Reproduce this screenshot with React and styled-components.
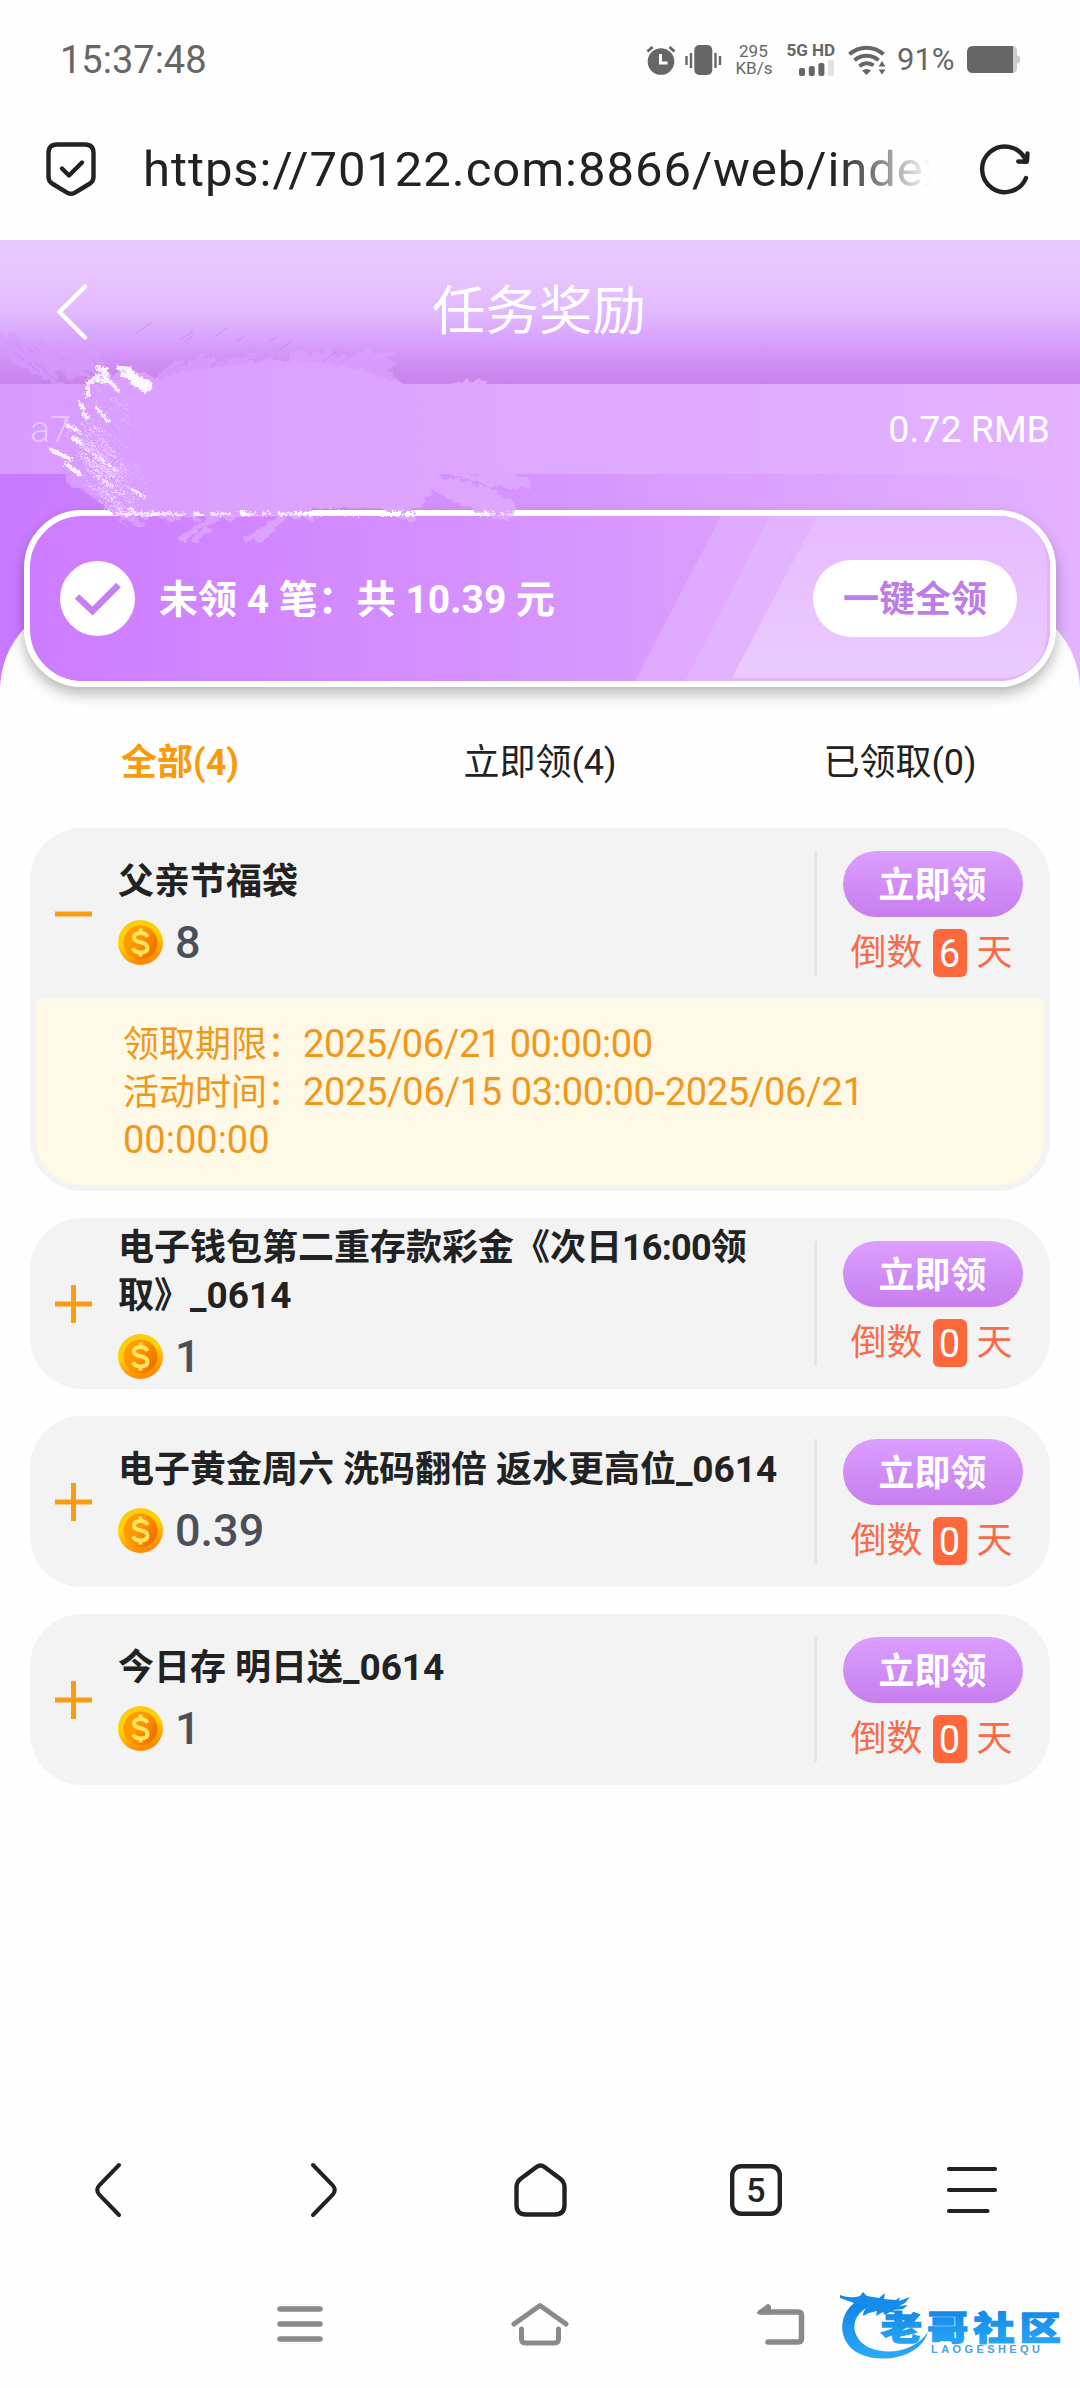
import React from 'react'
import styled, { createGlobalStyle } from 'styled-components'

const GlobalStyle = createGlobalStyle`
  * {
    box-sizing: border-box;
  }

  body {
    margin: 0;
    background: #fefefe;
    font-family: Roboto, 'Noto Sans CJK SC', sans-serif;
    color: #222;
  }

  svg {
    display: block;
    flex: none;
    overflow: visible;
  }
`

const Screen = styled.div`
  display: flex;
  flex-direction: column;
  width: 1080px;
  height: 2388px;
  overflow: hidden;
  background: #fefefe;
`

/* status bar */

const StatusBar = styled.div`
  display: flex;
  align-items: center;
  justify-content: space-between;
  height: 100px;
  padding: 19px 60px 0 60px;
  color: #666;
`

const Clock = styled.span`
  font-size: 38px;
`

const StatusIcons = styled.div`
  display: flex;
  align-items: center;
`

const Speed = styled.div`
  width: 36px;
  margin: 0 15px 0 14px;
  font-size: 17px;
  line-height: 17px;
  text-align: center;
  white-space: nowrap;
`

const Signal = styled.div`
  display: flex;
  flex-direction: column;
  align-items: flex-end;
  gap: 3px;
  margin-right: 13px;
  font-size: 17px;
  font-weight: 700;
  line-height: 14px;
  white-space: nowrap;
`

const Percent = styled.span`
  width: 60px;
  margin: 0 10px 0 12px;
  font-size: 31px;
`

/* address bar */

const AddressBar = styled.div`
  display: flex;
  align-items: center;
  height: 140px;
  padding: 0 48px 3px 46px;
`

const Url = styled.div`
  flex: none;
  width: 788px;
  margin: 3px 48px 0 47px;
  overflow: hidden;
  font-size: 49px;
  line-height: 64px;
  letter-spacing: 0.95px;
  white-space: nowrap;
  mask-image: linear-gradient(90deg, #000 88%, transparent 100%);
`

/* page header */

const Hero = styled.div`
  position: relative;
  flex: none;
  height: 450px;
  background: linear-gradient(90deg, #c979ff, #d695ff 50%, #e3b2ff);
`

const TitleBar = styled.div`
  display: grid;
  grid-template-columns: 100px 1fr 102px;
  align-items: center;
  height: 144px;
  background: linear-gradient(#e9caff, #e7c2ff 30%, #e1b9ff 50%, #d9a4fd 68%, #d18ff5 84%, #c983ec);
  color: #fff;
`

const PageTitle = styled.h1`
  margin: 0;
  font-size: 53.5px;
  font-weight: 400;
  line-height: 70px;
  text-align: center;
`

const UserBar = styled.div`
  display: flex;
  align-items: center;
  justify-content: space-between;
  height: 90px;
  padding: 0 30px;
  background: linear-gradient(90deg, #d99aff, #dfa8ff 50%, #e3b2ff);
  color: #fff;
  font-size: 37.5px;
`

const UserName = styled.span`
  font-weight: 300;
  opacity: 0.4;
`

const SheetTop = styled.div`
  height: 90px;
  margin-top: 126px;
  border-radius: 90px 90px 0 0;
  background: #fefefe;
`

const Scribble = styled.svg`
  position: absolute;
  left: 0;
  top: 80px;
  z-index: 2;
`

const BannerWrap = styled.div`
  position: absolute;
  left: 24px;
  right: 24px;
  top: 270px;
  border-radius: 58px;
  box-shadow: 0 7px 14px rgba(0, 0, 0, 0.28);
`

const Banner = styled.div`
  position: relative;
  display: flex;
  align-items: center;
  height: 177px;
  padding: 0 33px 0 30px;
  border: 6px solid #fff;
  border-radius: 58px;
  overflow: hidden;
  background: linear-gradient(90deg, #cd7cff, #d896ff 55%, #dc9eff 70%);
`

const Stripes = styled.svg`
  position: absolute;
  inset: 0;
`

const BannerIcon = styled.svg`
  position: relative;
`

const BannerText = styled.div`
  position: relative;
  flex: 1;
  margin: -6px 0 0 24px;
  color: #fff;
  font-size: 39px;
  font-weight: 700;
  white-space: nowrap;
`

const ClaimAll = styled.button`
  position: relative;
  width: 204px;
  height: 77px;
  padding: 0 0 5px;
  border: 0;
  border-radius: 39px;
  background: #fff;
  color: #be7ce6;
  font-family: inherit;
  font-size: 36px;
  font-weight: 700;
`

/* tabs */

const Tabs = styled.div`
  display: grid;
  grid-template-columns: repeat(3, 360px);
  height: 138px;
  padding-top: 46px;
`

const Tab = styled.div`
  font-size: 36px;
  line-height: 54px;
  text-align: center;
  color: ${p => (p.$active ? '#f99a0b' : '#222')};
  font-weight: ${p => (p.$active ? 700 : 400)};
`

/* rewards */

const List = styled.div`
  display: flex;
  flex-direction: column;
  gap: 27px;
  padding: 0 30px;
`

const Card = styled.div`
  border-radius: 52px;
  overflow: hidden;
  background: #f3f3f3;
`

const CardHead = styled.div`
  display: flex;
  align-items: center;
  height: 171px;
`

const Toggle = styled.div`
  width: 88px;
  padding-left: 25px;
`

const Info = styled.div`
  width: 696px;
  padding-bottom: 5px;
`

const Name = styled.div`
  width: 670px;
  padding-top: 1px;
  font-size: 36px;
  font-weight: 700;
  line-height: 48px;
`

const Digits = styled.span`
  font-size: ${p => p.$size}px;
  letter-spacing: ${p => p.$spacing || 0}px;
  line-height: 1;
`

const Amount = styled.div`
  display: flex;
  align-items: center;
  gap: 12px;
  height: 45px;
  margin-top: 14px;
  color: #4b4f5a;
  font-size: 45px;
  font-weight: 500;
`

const Action = styled.div`
  display: flex;
  flex-direction: column;
  align-items: center;
  width: 236px;
  height: 125px;
  padding-right: 4px;
  border-left: 3px solid #e6e6e6;
`

const ClaimButton = styled.button`
  flex: none;
  width: 180px;
  height: 66px;
  margin-left: 2px;
  padding: 0 0 4px;
  border: 0;
  border-radius: 33px;
  background: linear-gradient(#dc9eff, #c77eee);
  color: #fff;
  font-family: inherit;
  font-size: 36px;
  font-weight: 700;
`

const Countdown = styled.div`
  display: flex;
  align-items: center;
  gap: 10px;
  height: 48px;
  margin-top: 12px;
  color: #f96b48;
  font-size: 36px;
  line-height: 51px;
`

const Days = styled.span`
  width: 34px;
  height: 48px;
  border-radius: 6px;
  background: #ff683d;
  color: #fff;
  font-size: 38px;
  text-align: center;
`

const Detail = styled.div`
  height: 186px;
  margin: 0 6px 6px;
  padding: 22px 120px 0 87px;
  border-radius: 0 0 46px 46px;
  background: #fef9e6;
  color: #f0981c;
  font-size: 36px;
  line-height: 48px;
`

/* bottom bars */

const Spacer = styled.div`
  flex: 1;
`

const BrowserNav = styled.div`
  display: grid;
  grid-template-columns: repeat(5, 216px);
  justify-items: center;
  align-items: center;
  height: 120px;
`

const SystemNav = styled.div`
  display: flex;
  align-items: center;
  height: 138px;
  padding: 10px 12px 0 277px;
`

const NavIcon = styled.svg`
  margin-right: ${p => p.$gap}px;
`

const AlarmIcon = () => (
  <svg width="30" height="30" viewBox="0 0 30 30">
    <circle cx="15" cy="16.5" r="13.3" fill="#666" />
    <path d="M1.5 6.5 6.5 2M28.5 6.5 23.5 2" stroke="#666" strokeWidth="3" fill="none" />
    <path d="M14.5 9v9h7" stroke="#fff" strokeWidth="3" fill="none" />
  </svg>
)

const VibrateIcon = () => (
  <svg width="45" height="30" viewBox="-9 0 45 30">
    <rect x="9.3" y="0" width="18" height="30" rx="5" fill="#666" />
    <path d="M1.5 11v9M6 8v15M30.5 8v15M35 11v9" stroke="#666" strokeWidth="2.4" />
  </svg>
)

const SignalIcon = () => (
  <svg width="36" height="16" viewBox="0 0 36 16">
    <rect x="0" y="8" width="6" height="8" rx="2" fill="#666" />
    <rect x="9.8" y="6" width="6" height="10" rx="2" fill="#666" />
    <rect x="19.4" y="3" width="6" height="13" rx="2" fill="#666" />
    <rect x="29" y="0" width="6" height="16" rx="2" fill="#e2e2e2" />
  </svg>
)

const WifiIcon = () => (
  <svg width="37" height="30" viewBox="0 0 37 30">
    <g fill="none" stroke="#666" strokeWidth="4">
      <path d="M1.5 9.3a25 25 0 0 1 34 0" />
      <path d="M6.5 15.3a18 18 0 0 1 24 0" />
      <path d="M11.5 21.2a11 11 0 0 1 14-.8" />
    </g>
    <path d="M14 25.5c3-2 6-2 9 0L18.5 30zM30.5 21.5l3.5-5.5 3.5 5.5zM30.5 24.500h7L34 29.500z" fill="#666" />
  </svg>
)

const BatteryIcon = () => (
  <svg width="53" height="27" viewBox="0 0 53 27">
    <path d="M44 0h1q5 0 5 5v4.500q3 0 3 2v4q0 2-3 2V22q0 5-5 5h-1z" fill="#ccc" />
    <path d="M6 0h40v27H6q-6 0-6-6V6q0-6 6-6z" fill="#666" />
  </svg>
)

const ShieldIcon = () => (
  <svg width="50" height="54" viewBox="0 0 50 54" fill="none" stroke="#222" strokeWidth="4.400" strokeLinecap="round" strokeLinejoin="round">
    <path d="M11 2.500h28q8.500 0 8.500 8.500v24q0 4-3.500 6.500L28.500 50.800q-3.500 2-7 0L6 41.500Q2.500 39 2.500 35V11q0-8.500 8.500-8.500z" />
    <path d="M16 26.500l7 7 13-13" />
  </svg>
)

const ReloadIcon = () => (
  <svg width="51" height="50" viewBox="0 0 51 50" fill="none" stroke="#222" strokeWidth="4.400" strokeLinecap="round" strokeLinejoin="round">
    <path d="M47 34A22.800 22.800 0 1 1 46 14.500" />
    <path d="M48.500 9.500l-.6 8.200-8.600-.2" />
  </svg>
)

const CheckIcon = () => (
  <BannerIcon width="75" height="75" viewBox="0 0 75 75">
    <circle cx="37.500" cy="37.500" r="37.500" fill="#fff" />
    <path d="M17 35.500l15.500 14.500 26-26" fill="none" stroke="#c77ff4" strokeWidth="6.500" />
  </BannerIcon>
)

const ToggleIcon = ({ open }) => (
  <svg width="37" height="38" viewBox="0 0 37 38" stroke="#f99c12" strokeWidth="5">
    <path d={open ? 'M0 19h37' : 'M0 19h37M18.500 0v38'} />
  </svg>
)

const CoinIcon = () => (
  <svg width="45" height="45" viewBox="0 0 45 45">
    <defs>
      <linearGradient id="rim" x1="0" y1="0" x2="0.300" y2="1">
        <stop offset="0" stopColor="#f9c80e" />
        <stop offset="0.500" stopColor="#ffd400" />
        <stop offset="1" stopColor="#ff8c00" />
      </linearGradient>
      <linearGradient id="face" x1="0" y1="0" x2="1" y2="0.600">
        <stop offset="0" stopColor="#ff9d00" />
        <stop offset="0.500" stopColor="#ff9800" />
        <stop offset="1" stopColor="#f36f00" />
      </linearGradient>
    </defs>
    <circle cx="22.500" cy="22.500" r="22.500" fill="url(#rim)" />
    <circle cx="22.500" cy="22.500" r="17" fill="url(#face)" />
    <path
      d="M29.500 17q-1.500-4-7-4-6.500 0-6.500 4.500 0 3.500 6.500 4.800 7 1.400 7 5.500 0 4.700-7 4.700-5.500 0-7.500-4.200M22.500 8.500v4M22.500 32.500v4"
      fill="none"
      stroke="#ffe45c"
      strokeWidth="4"
    />
  </svg>
)

// parallel strokes scattered along the line a-b
const hatch = (a, b, { count, spread, len, angle, seed }) => {
  let s = seed
  const rand = () => {
    s = (s * 16807) % 2147483647
    return s / 2147483647
  }
  const rad = (angle * Math.PI) / 180
  let d = ''
  for (let i = 0; i < count; i++) {
    const t = rand()
    const l = len * (0.4 + rand() * 0.6)
    const x = a[0] + (b[0] - a[0]) * t + (rand() - 0.5) * spread
    const y = a[1] + (b[1] - a[1]) * t + (rand() - 0.5) * spread
    d += `M${x.toFixed(1)} ${y.toFixed(1)}l${(l * Math.cos(rad)).toFixed(1)} ${(l * Math.sin(rad)).toFixed(1)}`
  }
  return d
}

// smeared brush marks over the account name
const BrushMarks = () => (
  <Scribble width="560" height="230" viewBox="0 320 560 230">
    <defs>
      <linearGradient id="smear" gradientUnits="userSpaceOnUse" x1="0" y1="0" x2="540" y2="0">
        <stop offset="0" stopColor="#d698ff" />
        <stop offset="0.300" stopColor="#dba0ff" />
        <stop offset="1" stopColor="#dea7ff" />
      </linearGradient>
      <filter id="ragged" filterUnits="userSpaceOnUse" x="-20" y="310" width="600" height="250">
        <feTurbulence type="fractalNoise" baseFrequency="0.120" numOctaves="3" seed="4" />
        <feDisplacementMap in="SourceGraphic" scale="8" xChannelSelector="R" yChannelSelector="G" />
      </filter>
      <filter id="crumbs" filterUnits="userSpaceOnUse" x="-20" y="310" width="600" height="250">
        <feTurbulence type="fractalNoise" baseFrequency="0.400" numOctaves="2" seed="2" />
        <feDisplacementMap in="SourceGraphic" scale="7" xChannelSelector="R" yChannelSelector="G" />
      </filter>
    </defs>
    <g filter="url(#ragged)" fill="none" stroke="url(#smear)" strokeLinecap="round">
      <g strokeWidth="5" opacity="0.650">
        <path d={hatch([0, 345], [70, 352], { count: 40, spread: 26, len: 46, angle: 38, seed: 11 })} />
        <path d={hatch([150, 385], [350, 378], { count: 80, spread: 14, len: 46, angle: -36, seed: 23 })} />
        <path d={hatch([320, 385], [370, 380], { count: 36, spread: 16, len: 40, angle: -38, seed: 31 })} />
        <path d={hatch([360, 360], [390, 376], { count: 16, spread: 10, len: 26, angle: 40, seed: 35 })} />
      </g>
      <path
        d="M160 378Q200 366 290 360 350 362 410 386L440 392V480L420 508H330L150 514 125 510 66 482 70 400 105 376 130 370z"
        fill="url(#smear)"
        stroke="none"
      />
      <path d={hatch([66, 472], [125, 512], { count: 40, spread: 8, len: 30, angle: 36, seed: 41 })} strokeWidth="4" opacity="0.800" />
      <path d={hatch([110, 508], [310, 508], { count: 46, spread: 8, len: 18, angle: 28, seed: 53 })} strokeWidth="5" />
      <path d="M182 538L214 518M194 540L208 530M248 538L284 518M258 540L274 528" strokeWidth="6" />
      <path d={hatch([380, 500], [400, 508], { count: 18, spread: 8, len: 26, angle: 30, seed: 61 })} strokeWidth="5" />
      <path d={hatch([425, 478], [485, 496], { count: 46, spread: 14, len: 42, angle: 32, seed: 71 })} strokeWidth="5" />
      <path d={hatch([455, 474], [510, 476], { count: 20, spread: 6, len: 28, angle: 20, seed: 79 })} strokeWidth="5" />
      <path d="M452 386L466 382M464 386L484 382" strokeWidth="5" />
    </g>
    <path
      d={hatch([130, 345], [330, 350], { count: 8, spread: 26, len: 20, angle: -36, seed: 83 }) +
        hatch([10, 345], [80, 375], { count: 8, spread: 18, len: 18, angle: 38, seed: 87 })}
      stroke="#b877e0"
      strokeWidth="1"
      opacity="0.500"
      fill="none"
    />
    <g stroke="#fff" fill="none" filter="url(#crumbs)">
      <g strokeLinecap="round">
        <path d="M98 368L106 370M118 368L130 369M122 373L150 389M128 371L151 385M132 382L146 391" strokeWidth="4.500" opacity="0.900" />
        <path d="M88 384Q92 380 98 376L108 374M88 386V396M104 376L118 390M92 380L112 382" strokeWidth="4" opacity="0.850" />
        <path d="M80 403L84 409M84 414L88 418M97 408L108 421M67 426L76 430M73 438L80 442M50 449L70 459M66 464L80 474" strokeWidth="4" opacity="0.850" />
      </g>
      <path d={hatch([72, 425], [112, 502], { count: 110, spread: 26, len: 34, angle: 36, seed: 91 })} strokeWidth="1" strokeDasharray="3 2" opacity="0.500" />
      <path d={hatch([95, 395], [120, 480], { count: 70, spread: 36, len: 22, angle: 36, seed: 97 })} strokeWidth="0.900" strokeDasharray="2 3" opacity="0.400" />
      <path d="M130 488L146 498M128 508L136 512" strokeWidth="2.500" opacity="0.800" />
      <path d="M116 514H172" strokeWidth="4" opacity="0.650" />
      <path d="M172 514H345" strokeWidth="3" strokeDasharray="14 7 5 12 22 9" opacity="0.650" />
      <path d="M295 513L330 514M336 513H368M378 514H420" strokeWidth="4" strokeDasharray="24 3 9 6" />
      <path d="M478 514H516" strokeWidth="3" strokeDasharray="5 4 9 4" opacity="0.700" />
    </g>
  </Scribble>
)

const SiteLogo = () => (
  <svg width="226" height="76" viewBox="844 2288 226 76">
    <defs>
      <linearGradient id="logo" x1="0" y1="0" x2="0" y2="1">
        <stop offset="0" stopColor="#0f82e2" />
        <stop offset="1" stopColor="#2aaafa" />
      </linearGradient>
    </defs>
    <path
      d="M864 2300C838 2312 838 2345 862 2356 884 2366 922 2360 930 2334 918 2352 892 2358 872 2350 850 2340 852 2314 874 2308z"
      fill="url(#logo)"
    />
    <path
      d="M842 2297q10 4 20 1l3-4 4 4 12 2 6-5-1 6 12 1 4-3-1 4 11-4-5 6-6 3 9-1-5 4-10 1 6 3-9-1-5 3-2-3-7 4 1-5-8 2-6 3q0-5 4-9-14-4-27-9z"
      fill="#168be8"
    />
    <text
      x="883"
      y="2342"
      fill="url(#logo)"
      stroke="url(#logo)"
      strokeWidth="1.500"
      fontFamily="'Noto Sans CJK SC', sans-serif"
      fontWeight="900"
      fontSize="33"
      textLength="145"
      transform="translate(883 0) scale(1.240 1) translate(-883 0)"
    >
      老哥社区
    </text>
    <text x="933" y="2355" fill="#4aa3dd" fontFamily="'Liberation Sans', sans-serif" fontWeight="700" fontSize="11" textLength="109">
      LAOGESHEQU
    </text>
  </svg>
)

const rewards = [
  {
    name: '父亲节福袋',
    amount: '8',
    days: 6,
    open: true,
  },
  {
    name: (
      <>
        电子钱包第二重存款彩金《次日
        <Digits $size={36} $spacing={-0.8}>
          16:00
        </Digits>
        领取》<Digits $size={37}>_0614</Digits>
      </>
    ),
    amount: '1',
    days: 0,
  },
  {
    name: (
      <>
        电子黄金周六 洗码翻倍 返水更高位<Digits $size={37}>_0614</Digits>
      </>
    ),
    amount: '0.39',
    days: 0,
  },
  {
    name: (
      <>
        今日存 明日送<Digits $size={37}>_0614</Digits>
      </>
    ),
    amount: '1',
    days: 0,
  },
]

const RewardCard = ({ name, amount, days, open }) => (
  <Card>
    <CardHead>
      <Toggle>
        <ToggleIcon open={open} />
      </Toggle>
      <Info>
        <Name>{name}</Name>
        <Amount>
          <CoinIcon />
          {amount}
        </Amount>
      </Info>
      <Action>
        <ClaimButton>立即领</ClaimButton>
        <Countdown>
          倒数<Days>{days}</Days>天
        </Countdown>
      </Action>
    </CardHead>
    {open && (
      <Detail>
        领取期限：
        <Digits $size={38} $spacing={-0.45}>
          2025/06/21 00:00:00
        </Digits>
        <br />
        活动时间：
        <Digits $size={38} $spacing={-0.35}>
          2025/06/15 03:00:00-2025/06/21
        </Digits>
        <br />
        <Digits $size={38}>00:00:00</Digits>
      </Detail>
    )}
  </Card>
)

const App = () => (
  <>
    <GlobalStyle />
    <Screen>
      <StatusBar>
        <Clock>15:37:48</Clock>
        <StatusIcons>
          <AlarmIcon />
          <VibrateIcon />
          <Speed>
            295
            <br />
            KB/s
          </Speed>
          <Signal>
            5G HD
            <SignalIcon />
          </Signal>
          <WifiIcon />
          <Percent>91%</Percent>
          <BatteryIcon />
        </StatusIcons>
      </StatusBar>
      <AddressBar>
        <ShieldIcon />
        <Url>https://70122.com:8866/web/index</Url>
        <ReloadIcon />
      </AddressBar>

      <Hero>
        <TitleBar>
          <svg width="90" height="56" viewBox="0 0 90 56" fill="none" stroke="#fff" strokeWidth="4.500" strokeLinecap="round" strokeLinejoin="round">
            <path d="M85 2.500L59.500 28 85 53.500" />
          </svg>
          <PageTitle>任务奖励</PageTitle>
        </TitleBar>
        <UserBar>
          <UserName>a7</UserName>
          <span>0.72 RMB</span>
        </UserBar>
        <SheetTop />
        <BannerWrap>
          <Banner>
            <Stripes width="1020" height="165" viewBox="0 0 1020 165">
              <defs>
                <linearGradient id="shine" x1="0" y1="0" x2="0" y2="1">
                  <stop offset="0" stopColor="#e6baff" />
                  <stop offset="1" stopColor="#ebcbff" />
                </linearGradient>
              </defs>
              <path d="M691 0h329v165H605z" fill="#dfaaff" />
              <path d="M740 0h280v165H655z" fill="#e2b3ff" />
              <path d="M787 0h182q48 0 48 52v58q0 52-48 52H702z" fill="url(#shine)" />
            </Stripes>
            <CheckIcon />
            <BannerText>未领 4 笔：共 10.39 元</BannerText>
            <ClaimAll>一键全领</ClaimAll>
          </Banner>
        </BannerWrap>
        <BrushMarks />
      </Hero>

      <Tabs>
        <Tab $active>全部(4)</Tab>
        <Tab>立即领(4)</Tab>
        <Tab>已领取(0)</Tab>
      </Tabs>

      <List>
        {rewards.map((reward, i) => (
          <RewardCard key={i} {...reward} />
        ))}
      </List>

      <Spacer />

      <BrowserNav>
        <svg width="26" height="54" viewBox="0 0 26 54" fill="none" stroke="#222" strokeWidth="4" strokeLinecap="round">
          <path d="M24 2L4.500 22Q0 27 4.500 32L24 52" />
        </svg>
        <svg width="26" height="54" viewBox="0 0 26 54" fill="none" stroke="#222" strokeWidth="4" strokeLinecap="round">
          <path d="M2 2L21.500 22Q26 27 21.500 32L2 52" />
        </svg>
        <svg width="53" height="54" viewBox="0 0 53 54" fill="none" stroke="#222" strokeWidth="4.400">
          <path d="M22.500 4Q26.500 1 30.500 4L46 15.500Q50.500 19 50.500 24V42Q50.500 51.500 41 51.500H12Q2.500 51.500 2.500 42V24Q2.500 19 7 15.500z" />
        </svg>
        <svg width="52" height="52" viewBox="0 0 52 52">
          <rect x="2.200" y="2.200" width="47.600" height="47.600" rx="9" fill="none" stroke="#222" strokeWidth="4.400" />
          <text x="26" y="38" fill="#222" fontSize="34" fontWeight="500" textAnchor="middle">
            5
          </text>
        </svg>
        <svg width="50" height="48" viewBox="0 0 50 48" fill="none" stroke="#222" strokeWidth="4.200" strokeLinecap="round">
          <path d="M2 3h46M2 24h46M2 45h38.500" />
        </svg>
      </BrowserNav>

      <SystemNav>
        <NavIcon $gap={188} width="46" height="38" viewBox="0 0 46 38" stroke="#8a8a8a" strokeWidth="5.500" strokeLinecap="round">
          <path d="M3 4h40M3 19h40M3 34h40" />
        </NavIcon>
        <NavIcon $gap={187} width="58" height="44" viewBox="0 0 58 44" fill="none" stroke="#8a8a8a" strokeWidth="5" strokeLinecap="round" strokeLinejoin="round">
          <path d="M3 22L29 3.500 55 22" />
          <path d="M10.500 27v10q0 4 4 4h29q4 0 4-4V27" />
        </NavIcon>
        <NavIcon $gap={38} width="48" height="42" viewBox="0 0 48 42" fill="none" stroke="#8a8a8a" strokeWidth="5.500" strokeLinecap="round">
          <path d="M5 9h37q3.500 0 3.500 3.500v23q0 3.500-3.500 3.500H12" />
          <path d="M1 9L12 0.500 15 3V11.500H3q-3-1-2-2.500z" fill="#8a8a8a" stroke="none" />
        </NavIcon>
        <SiteLogo />
      </SystemNav>
    </Screen>
  </>
)

export default App
